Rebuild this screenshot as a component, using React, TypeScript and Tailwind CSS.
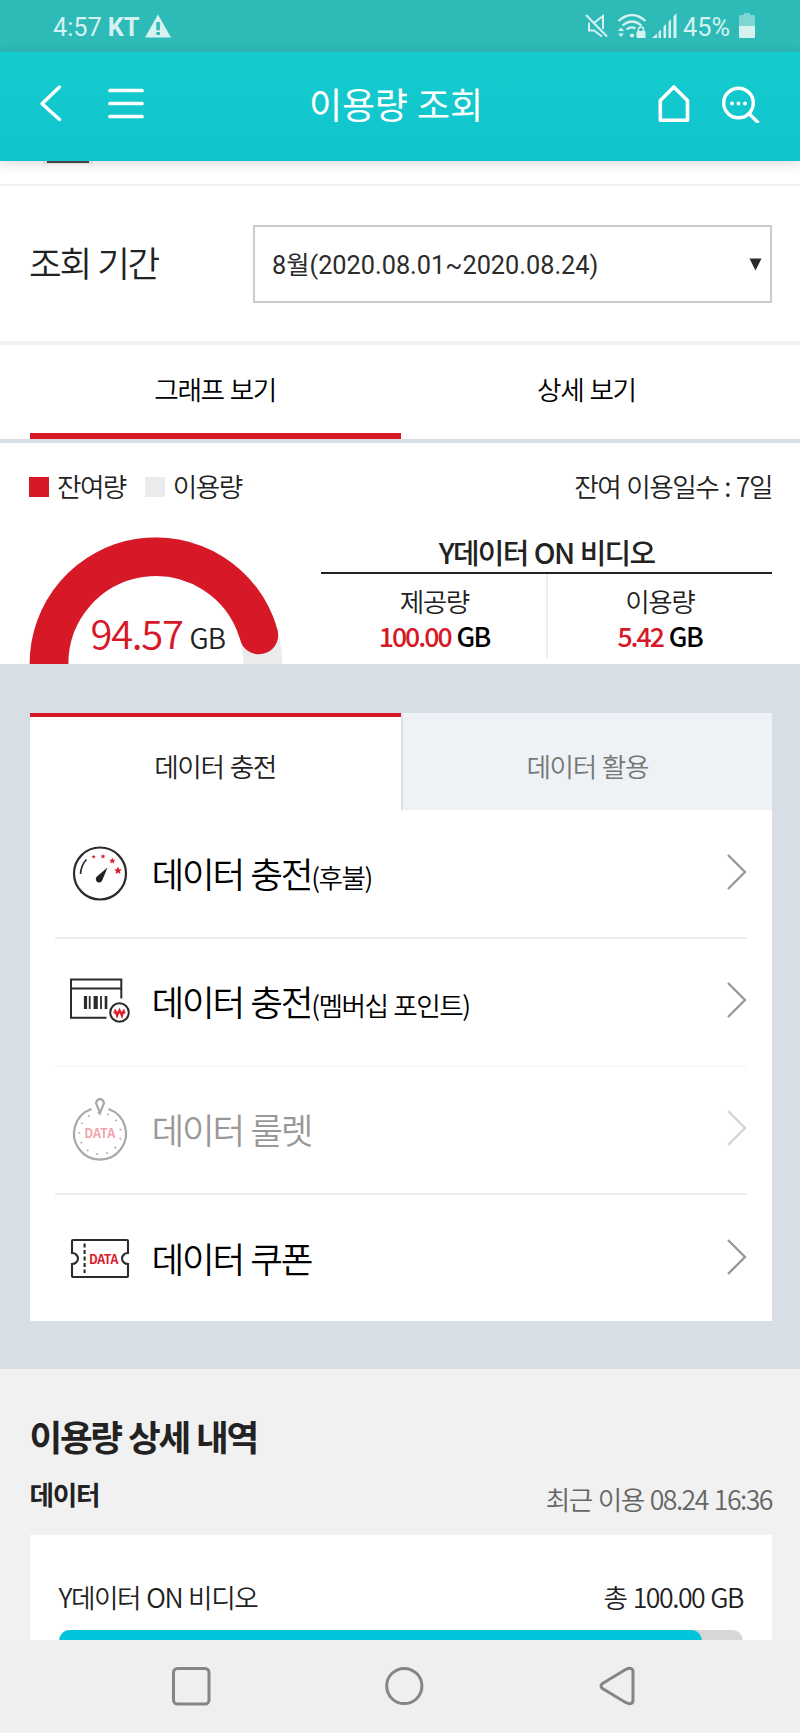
import React from "react";

function StatusBar() {
  return (
    <div className="flex h-[52px] items-center bg-[#2ebbb8] pl-[53px] pr-[45px] font-[Roboto,sans-serif] text-[25.300px] font-normal leading-none text-[#d5f1f0]">
      <span className="pt-[3px]">4:57</span>
      <span className="ml-[6px] pt-[3px] font-bold">KT</span>
      <svg className="ml-[5px]" width="26" height="24" viewBox="0 0 26 24">
        <path fillRule="evenodd" fill="currentColor" d="M13 0.5 26 23.5H0ZM11.3 8v8.2h3.6V8ZM11.3 18v3h3.6v-3Z" />
      </svg>
      <div className="ml-auto flex items-center">
        <svg width="23" height="24" viewBox="0 0 23 24" fill="none" stroke="currentColor" strokeWidth="2">
          <path d="M1 1 22 22.500M9.500 8.500 18 2v13M4 8.500v8h5l8 6" />
        </svg>
        <svg className="ml-[9px]" width="30" height="26" viewBox="0 0 30 26" fill="none" stroke="currentColor" strokeWidth="2.200">
          <path d="M1.500 8Q15 -4 28.500 8M5.500 12.500Q15 4.500 24.500 12.500M9.500 16.500Q14 13 18.500 15.500" />
          <g fill="currentColor" stroke="none">
            <circle cx="15" cy="22.500" r="2.100" />
            <path d="M1 18 4 14.500 7 18ZM1 20.500h6L4 24Z" />
            <rect x="19.500" y="18" width="9" height="7" rx="1" />
          </g>
          <path d="M21.500 19v-2.500a2.500 2.500 0 0 1 5 0V19" strokeWidth="1.500" />
        </svg>
        <svg className="ml-[5px]" width="25" height="25" viewBox="0 0 25 25" fill="currentColor">
          <path d="M0 25 5 20.500V25ZM6.500 25V19L9 16.500V25ZM11.500 25V13.500L14 11V25ZM16.500 25V9L19 6V25ZM21.500 25V3.500L24.500 0V25Z" />
        </svg>
        <span className="ml-[6px] pt-[3px]">45%</span>
        <svg className="ml-[9px]" width="16" height="25" viewBox="0 0 16 25">
          <path fill="#7fd5d2" d="M1 2h4V0h6v2h4l1 1v11H0V3Z" />
          <path fill="currentColor" d="M0 13h16v11l-1 1H1l-1-1Z" />
        </svg>
      </div>
    </div>
  );
}

function Header() {
  return (
    <header className="relative z-10 flex h-[109px] items-center bg-linear-to-b from-[#14ccce] to-[#10c4cd] pl-[38px] pr-[40px] pb-[7px] text-white shadow-[0_2px_12px_rgba(0,0,0,0.16)]">
      <svg width="26" height="38" viewBox="0 0 26 38" fill="none" stroke="currentColor" strokeWidth="3.400" strokeLinecap="round" strokeLinejoin="round">
        <path d="M21.500 3 4 19.700 21.500 35.500" />
      </svg>
      <svg className="ml-[44px]" width="36" height="38" viewBox="0 0 36 38" stroke="currentColor" strokeWidth="3.700" strokeLinecap="round">
        <path d="M2 6.500h32M2 19.500h32M2 32.500h32" />
      </svg>
      <h1 className="ml-[165px] text-[36px] font-normal leading-[52px] tracking-[-0.200px]">이용량 조회</h1>
      <svg className="ml-auto" width="34" height="38" viewBox="0 0 34 38" fill="none" stroke="currentColor" strokeWidth="3.600" strokeLinejoin="round">
        <path d="M17.800 3 31.500 16.500V36.200H4.300V16.500Z" />
      </svg>
      <svg className="ml-[32px]" width="38" height="40" viewBox="0 0 38 40" fill="none" stroke="currentColor" strokeWidth="3.400" strokeLinecap="round">
        <circle cx="16.500" cy="20" r="14.800" />
        <path d="M27.500 31 35.500 39" />
        <path d="M10 20.400h.01M16.500 20.400h.01M23 20.400h.01" strokeWidth="4" />
      </svg>
    </header>
  );
}

function PeriodRow() {
  return (
    <section className="flex h-[159px] items-start border-b-[4px] border-[#f2f2f2] pl-[29px] pr-[28px] pt-[39px]">
      <h2 className="w-[224px] text-[35.500px] leading-[74px] tracking-[-2.200px]">조회 기간</h2>
      <button className="flex h-[78px] flex-1 items-center justify-between border-2 border-[#cbcbcb] bg-white pl-[17px] pr-[8px] font-[Roboto,'Noto_Sans_CJK_KR',sans-serif] text-[25.300px] font-normal text-[#2b2b2b] [word-spacing:0]">
        <span className="pt-[4px]">8월(2020.08.01~2020.08.24)</span>
        <svg width="13" height="13" viewBox="0 0 13 13" fill="currentColor">
          <path d="M.5 0.500h12l-6 12Z" />
        </svg>
      </button>
    </section>
  );
}

function ViewTabs() {
  return (
    <div className="flex h-[98px] border-b-[4px] border-[#d8dfe7] pl-[29.500px] pr-[28px] text-[26.667px] leading-[88px] tracking-[-1.400px] text-black">
      <div className="w-1/2 border-b-[6.500px] border-[#d71826] text-center">그래프 보기</div>
      <div className="w-1/2 text-center">상세 보기</div>
    </div>
  );
}

function Gauge() {
  return (
    <div className="relative h-[127px] w-[254px]">
      <svg width="254" height="127" viewBox="0 0 254 127" fill="none" strokeWidth="38.700">
        <path d="M20 128V126.500A106.900 106.900 0 0 1 233.800 126.500V128" stroke="#ebebeb" />
        <path d="M20 128V126.500A106.900 106.900 0 0 1 229 95" stroke="#d71826" />
        <circle cx="229.900" cy="98" r="19.300" fill="#d71826" />
      </svg>
      <div className="absolute left-[61.500px] top-[65px] whitespace-nowrap leading-[60px] tracking-[-1.300px]">
        <span className="text-[40px] text-[#d71826]">94.57</span>
        <span className="ml-[7px] text-[28px] tracking-[-1px]">GB</span>
      </div>
    </div>
  );
}

function PlanCell({ label, value }: { label: string; value: string }) {
  return (
    <div className="w-1/2 pt-[9px] text-center text-[26.667px] leading-[35px] tracking-[-1.600px]">
      <div>{label}</div>
      <div className="font-medium text-black">
        <span className="tracking-[-2px] text-[#d71826]">{value}</span> GB
      </div>
    </div>
  );
}

function Summary() {
  return (
    <section className="h-[221px] pl-[29px] pr-[28px]">
      <div className="flex h-[94px] items-center pb-[7px] text-[26.667px] tracking-[-1.600px]">
        <i className="size-[20px] bg-[#d71826]" />
        <span className="ml-[8px] pb-[2px]">잔여량</span>
        <i className="ml-[19px] size-[20px] bg-[#ebebeb]" />
        <span className="ml-[8px] pb-[2px]">이용량</span>
        <span className="ml-auto pb-[2px] tracking-[-1.500px]">잔여 이용일수 : 7일</span>
      </div>
      <div className="flex h-[127px] justify-between">
        <Gauge />
        <div className="w-[451px]">
          <h3 className="h-[37px] border-b-2 border-[#222] text-center text-[28.900px] font-medium leading-[28px] tracking-[-1.700px]">Y데이터 ON 비디오</h3>
          <div className="flex h-[84px] divide-x-2 divide-[#eaeff4] pl-[2px]">
            <PlanCell label="제공량" value="100.00" />
            <PlanCell label="이용량" value="5.42" />
          </div>
        </div>
      </div>
    </section>
  );
}

const star = "M0-4 1.200-1.400 4-1.200 1.900.7 2.600 3.500 0 2-2.600 3.500-1.900.7-4-1.200-1.200-1.400Z";

function GaugeIcon() {
  return (
    <svg width="60" height="60" viewBox="0 0 60 60" fill="none" stroke="#2b2b2b" strokeWidth="2.200">
      <circle cx="30" cy="30.500" r="26" />
      <path d="M10.500 31C11 24.500 13 20 16.500 16.500" strokeWidth="1.700" />
      <path d="M37.500 24.500 27.200 33.300a3.400 3.400 0 1 0 5.300 3.500Z" fill="#222" stroke="none" />
      <g fill="#dc1b2b" stroke="none">
        <path d={star} transform="translate(48 27.600) scale(.95)" />
        <path d={star} transform="translate(42.300 17.800) scale(.75)" />
        <path d={star} transform="translate(33 13.400) scale(.6)" />
        <path d={star} transform="translate(23.700 13.700) scale(.5)" />
      </g>
    </svg>
  );
}

function BarcodeIcon() {
  return (
    <svg width="60" height="60" viewBox="0 0 60 60" fill="none" stroke="#2b2b2b" strokeWidth="2">
      <path d="M51.300 27.500V8.500H1V46.700H36.500M1 17.500H51.300" />
      <path d="M15.500 25v13" strokeWidth="3.200" />
      <path d="M19.700 25v13M31 25v13" strokeWidth="1.800" />
      <path d="M25.700 25v13" strokeWidth="4.200" />
      <path d="M36 25v13" strokeWidth="2.600" />
      <circle cx="49.500" cy="41.500" r="9.300" />
      <path d="M45 38.500 47 45 49.500 39 52 45 54 38.500M43.500 41.500h12" stroke="#dc1b2b" strokeWidth="2" />
    </svg>
  );
}

function RouletteIcon() {
  return (
    <svg width="60" height="68" viewBox="0 0 60 68" fill="none" stroke="#2b2b2b" strokeWidth="2.200">
      <path d="M21.500 14A26 26 0 1 0 38.500 14M30 18 26.800 10a3.800 3.800 0 1 1 6.400 0Z" />
      <circle cx="30" cy="38.500" r="20.800" strokeWidth="1.800" strokeDasharray="1.500 8.552" strokeDashoffset="-4.500" />
      <text x="29.700" y="43.200" textAnchor="middle" fill="#dc1b2b" stroke="none" className="text-[12.500px] font-bold">DATA</text>
    </svg>
  );
}

function CouponIcon() {
  return (
    <svg width="60" height="60" viewBox="0 0 60 60" fill="none" stroke="#2b2b2b" strokeWidth="2.100">
      <path d="M3 12H57a1 1 0 0 1 1 1V25a6 5.500 0 0 0 0 11V48a1 1 0 0 1-1 1H3a1 1 0 0 1-1-1V36a6 5.500 0 0 0 0-11V13a1 1 0 0 1 1-1Z" />
      <path d="M14.600 15.500V45" strokeDasharray="4 2.500" />
      <text x="33.500" y="35.500" textAnchor="middle" fill="#dc1b2b" stroke="none" className="text-[12.300px] font-bold tracking-[-0.400px]">DATA</text>
    </svg>
  );
}

type Item = { title: string; note?: string; icon: React.ReactNode; off?: boolean };

const items: Item[] = [
  { title: "데이터 충전", note: "(후불)", icon: <GaugeIcon /> },
  { title: "데이터 충전", note: "(멤버십 포인트)", icon: <BarcodeIcon /> },
  { title: "데이터 룰렛", icon: <RouletteIcon />, off: true },
  { title: "데이터 쿠폰", icon: <CouponIcon /> },
];

function DataMenu() {
  return (
    <section className="h-[705px] bg-[#d8dee6] pl-[29.500px] pt-[48.500px]">
      <div className="h-[608.500px] w-[742.400px] bg-white">
        <div className="flex h-[97.500px] text-[26.667px] tracking-[-1.400px]">
          <div className="w-1/2 border-t-[4px] border-[#d71826] text-center leading-[97px]">데이터 충전</div>
          <div className="w-1/2 border-l-2 border-[#d8dfe7] bg-[#eef1f5] text-center leading-[105px] text-[#777]">데이터 활용</div>
        </div>
        <ul className="px-[25px]">
          {items.map((item, i) => (
            <li
              key={i}
              className={
                i === 3
                  ? "h-[128.200px]"
                  : i === 1
                    ? "h-[128.200px] border-b-2 border-[#f7f8fa]"
                    : "h-[128.500px] border-b-2 border-[#ebeff4]"
              }
            >
              <div className={item.off ? "flex h-[125px] items-center opacity-40" : "flex h-[125px] items-center"}>
                <div className="ml-[15.500px] flex h-[60px] w-[60px] items-center">{item.icon}</div>
                <div className="ml-[21.500px] text-[35.556px] leading-[52px] tracking-[-2.200px] text-black">
                  {item.title}
                  <span className="text-[26.667px] leading-none tracking-[-1.550px]">{item.note}</span>
                </div>
                <svg className="mb-[2px] ml-auto" width="20" height="36" viewBox="0 0 20 36" fill="none" stroke="#999" strokeWidth="2.400">
                  <path d="M1 1 18 18 1 35" />
                </svg>
              </div>
            </li>
          ))}
        </ul>
      </div>
    </section>
  );
}

function Detail() {
  return (
    <section className="h-[271px] overflow-hidden bg-[#f1f1f1] pl-[29.500px] pr-[28px] pt-[41px]">
      <h2 className="text-[35.556px] font-bold leading-[52px] tracking-[-2.300px]">이용량 상세 내역</h2>
      <div className="flex h-[73px] items-start justify-between text-[26.667px] leading-[40px]">
        <h3 className="pt-[12px] font-bold tracking-[-1.333px]">데이터</h3>
        <span className="pt-[17px] tracking-[-1.500px] text-[#666]">최근 이용 08.24 16:36</span>
      </div>
      <div className="h-[200px] bg-white px-[29px] pt-[42px]">
        <div className="flex h-[53px] justify-between text-[26.667px] leading-[40px] tracking-[-1.450px]">
          <span>Y데이터 ON 비디오</span>
          <span>총 100.00 GB</span>
        </div>
        <div className="h-[22px] rounded-full bg-[#d7d7d7]">
          <div className="h-full w-[94%] rounded-full bg-[#00c4db]" />
        </div>
      </div>
    </section>
  );
}

function NavBar() {
  return (
    <nav className="flex h-[93px] items-center justify-between bg-[#efefef] pb-[2px] pl-[171px] pr-[163px]">
      <svg width="40" height="40" viewBox="0 0 40 40" fill="none" stroke="#858585" strokeWidth="3">
        <rect x="2.500" y="2.500" width="35.500" height="35.500" rx="4" />
      </svg>
      <svg width="40" height="40" viewBox="0 0 40 40" fill="none" stroke="#858585" strokeWidth="3">
        <circle cx="19.300" cy="20" r="17.600" />
      </svg>
      <svg width="38" height="40" viewBox="0 0 38 40" fill="none" stroke="#858585" strokeWidth="3">
        <path d="M3.500 17.500 27 3.300Q34 .5 34 6V34Q34 39.500 27 36.700L3.500 22.500Q.5 20 3.500 17.500Z" />
      </svg>
    </nav>
  );
}

export default function App() {
  return (
    <div className="w-[800px] overflow-hidden bg-white font-['Noto_Sans_CJK_KR',sans-serif] font-[350] text-[#222] [word-spacing:1.500px]">
      <StatusBar />
      <Header />
      <div className="h-[25px] border-b-2 border-[#f2f2f2] pl-[43px]">
        <div className="relative z-20 h-[3px] w-[50px] bg-[#dadada] px-[4px]">
          <div className="h-[1.500px] bg-[#444]" />
        </div>
      </div>
      <PeriodRow />
      <ViewTabs />
      <Summary />
      <DataMenu />
      <Detail />
      <NavBar />
    </div>
  );
}
